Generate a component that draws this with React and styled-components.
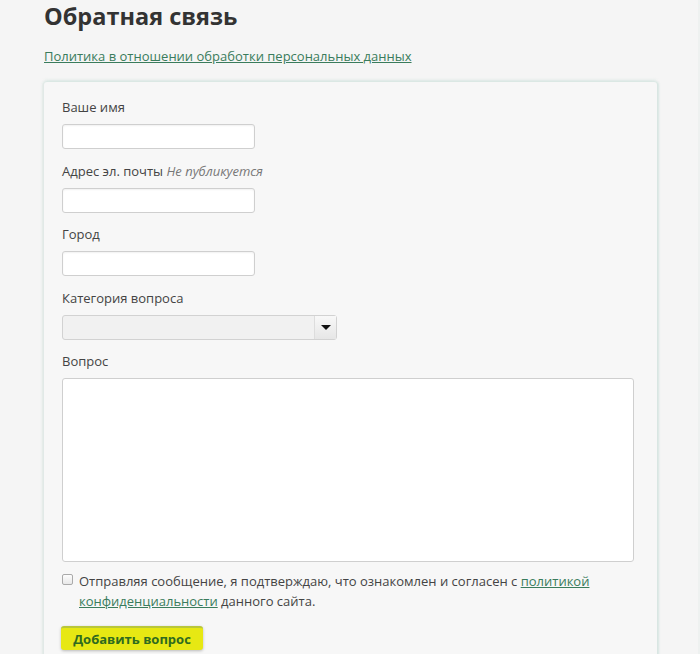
import React from "react";
import styled, { createGlobalStyle } from "styled-components";

const Global = createGlobalStyle`
  html, body { margin: 0; padding: 0; background: #f5f5f5; }
  body { font-family: "Open Sans", "Noto Sans", sans-serif; color: #444; }
  * { box-sizing: border-box; }
`;

const Page = styled.div`
  width: 700px;
  height: 654px;
  overflow: hidden;
  padding: 0 0 0 44px;
  position: relative;
  border-right: 2px solid #eef1f0;
`;

const Title = styled.h1`
  margin: 0;
  font-size: 23.5px;
  line-height: 32px;
  font-weight: 700;
  color: #333;
`;

const TopLink = styled.a`
  display: inline-block;
  margin-top: 14px;
  font-size: 13px;
  line-height: 20px;
  color: #3a7c5c;
  text-decoration: underline;
`;

const Panel = styled.form`
  margin-top: 16px;
  width: 613px;
  background: #f7f7f7;
  padding: 16px 24px 20px 18px;
  box-shadow: 0 -2px 3px rgba(210, 228, 222, 0.7), -2px 0 2px rgba(225, 232, 230, 0.8),
    2px 0 2px rgba(215, 230, 226, 0.9);
  border-radius: 3px 3px 0 0;
`;

const Field = styled.div`
  display: flex;
  flex-direction: column;
  align-items: flex-start;
  gap: 8px;
  margin-bottom: ${(p) => (p.$last ? "9px" : "12.5px")};
`;

const Label = styled.label`
  font-size: 13px;
  line-height: 18px;
  color: #444;
`;

const Hint = styled.em`
  color: #777;
`;

const Input = styled.input`
  width: 193px;
  height: 25px;
  border: 1px solid #cfcfcf;
  border-radius: 3px;
  background: #fff;
  box-shadow: inset 0 1px 2px rgba(0, 0, 0, 0.06);
  outline: none;
`;

const SelectBox = styled.div`
  position: relative;
  width: 275px;
  height: 25px;
  border: 1px solid #d2d2d2;
  border-radius: 3px;
  background: #f1f1f1;
`;

const SelectArrow = styled.div`
  position: absolute;
  right: 0;
  top: 0;
  bottom: 0;
  width: 22px;
  background: linear-gradient(#f8f8f8, #e6e6e6);
  border-left: 1px solid #ddd;
  display: flex;
  align-items: center;
  justify-content: center;
  &::after {
    content: "";
    border-left: 5px solid transparent;
    border-right: 5px solid transparent;
    border-top: 5px solid #111;
    margin-top: 1px;
  }
`;

const TextArea = styled.textarea`
  width: 572px;
  height: 184px;
  border: 1px solid #cfcfcf;
  border-radius: 3px;
  background: #fff;
  resize: none;
  outline: none;
`;

const Agree = styled.div`
  display: flex;
  align-items: flex-start;
  gap: 6px;
  width: 572px;
`;

const Check = styled.span`
  flex: none;
  width: 11px;
  height: 11px;
  margin-top: 3px;
  border: 1px solid #aaa;
  border-radius: 2px;
  background: linear-gradient(#fdfdfd, #e8e8e8);
`;

const AgreeText = styled.p`
  margin: 0;
  font-size: 13px;
  line-height: 20px;
  color: #444;
  width: 530px;
`;

const InlineLink = styled.a`
  color: #3a7c5c;
  text-decoration: underline;
`;

const Submit = styled.button`
  display: block;
  margin-top: 15px;
  margin-left: -1px;
  width: 142px;
  height: 24px;
  border: none;
  border-top: 2px solid #b9c73a;
  border-radius: 3px;
  background: #e7e813;
  box-shadow: 0 1px 3px rgba(0, 0, 0, 0.25);
  font-family: "Open Sans", sans-serif;
  font-weight: 700;
  font-size: 13px;
  line-height: 20px;
  color: #2f6b1f;
  padding: 0;
`;

export default function App() {
  return (
    <Page>
      <Global />
      <Title>Обратная связь</Title>
      <TopLink href="#">Политика в отношении обработки персональных данных</TopLink>
      <Panel>
        <Field>
          <Label>Ваше имя</Label>
          <Input type="text" />
        </Field>
        <Field>
          <Label>
            Адрес эл. почты <Hint>Не публикуется</Hint>
          </Label>
          <Input type="text" />
        </Field>
        <Field>
          <Label>Город</Label>
          <Input type="text" />
        </Field>
        <Field>
          <Label>Категория вопроса</Label>
          <SelectBox>
            <SelectArrow />
          </SelectBox>
        </Field>
        <Field $last>
          <Label>Вопрос</Label>
          <TextArea />
        </Field>
        <Agree>
          <Check />
          <AgreeText>
            Отправляя сообщение, я подтверждаю, что ознакомлен и согласен с{" "}
            <InlineLink href="#">политикой конфиденциальности</InlineLink> данного сайта.
          </AgreeText>
        </Agree>
        <Submit type="button">Добавить вопрос</Submit>
      </Panel>
    </Page>
  );
}
